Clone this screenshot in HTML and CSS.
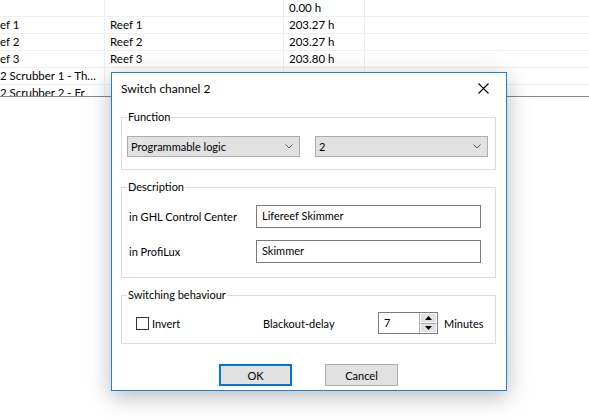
FILE: index.html
```html
<!DOCTYPE html>
<html lang="en">
<head>
    <meta charset="UTF-8">
    <title>Switch channel 2</title>
    <link rel="stylesheet" href="styles.css">
</head>
<body>
    <div class = 'channel_list'>
        <div class = 'list_row'>
            <div class = 'cell'></div>
            <div class = 'cell'></div>
            <div class = 'cell'>0.00 h</div>
            <div class = 'cell last'></div>
        </div>
        <div class = 'list_row'>
            <div class = 'cell'>ef 1</div>
            <div class = 'cell'>Reef 1</div>
            <div class = 'cell'>203.27 h</div>
            <div class = 'cell last'></div>
        </div>
        <div class = 'list_row'>
            <div class = 'cell'>ef 2</div>
            <div class = 'cell'>Reef 2</div>
            <div class = 'cell'>203.27 h</div>
            <div class = 'cell last'></div>
        </div>
        <div class = 'list_row'>
            <div class = 'cell'>ef 3</div>
            <div class = 'cell'>Reef 3</div>
            <div class = 'cell'>203.80 h</div>
            <div class = 'cell last'></div>
        </div>
        <div class = 'list_row'>
            <div class = 'cell'>2 Scrubber 1 - Th…</div>
            <div class = 'cell'></div>
            <div class = 'cell'></div>
            <div class = 'cell last'></div>
        </div>
        <div class = 'list_row'>
            <div class = 'cell'>2 Scrubber 2 - Fr</div>
            <div class = 'cell'></div>
            <div class = 'cell'></div>
            <div class = 'cell last'></div>
        </div>
    </div>

    <div class = 'dialog'>
        <div class = 'dialog_title'>
            <span>Switch channel 2</span>
            <svg class = 'close_icon' width = '11' height = '11' viewBox = '0 0 11 11'>
                <path d = 'M0.5 0.5 L10.5 10.5 M10.5 0.5 L0.5 10.5' stroke = '#000' stroke-width = '1.1' fill = 'none'/>
            </svg>
        </div>

        <fieldset class = 'group group_function'>
            <legend>Function</legend>
            <div class = 'function_body'>
                <div class = 'combo'>
                    <span>Programmable logic</span>
                    <svg width = '8' height = '5' viewBox = '0 0 8 5'><path d = 'M0.5 0.5 L4 4 L7.5 0.5' stroke = '#555' fill = 'none'/></svg>
                </div>
                <div class = 'combo'>
                    <span>2</span>
                    <svg width = '8' height = '5' viewBox = '0 0 8 5'><path d = 'M0.5 0.5 L4 4 L7.5 0.5' stroke = '#555' fill = 'none'/></svg>
                </div>
            </div>
        </fieldset>

        <fieldset class = 'group group_description'>
            <legend>Description</legend>
            <div class = 'description_body'>
                <label>in GHL Control Center</label>
                <div class = 'text_box'>Lifereef Skimmer</div>
                <label>in ProfiLux</label>
                <div class = 'text_box'>Skimmer</div>
            </div>
        </fieldset>

        <fieldset class = 'group group_switching'>
            <legend>Switching behaviour</legend>
            <div class = 'switching_body'>
                <div class = 'check_item'>
                    <span class = 'check_box'></span>
                    <span>Invert</span>
                </div>
                <span class = 'delay_label'>Blackout-delay</span>
                <div class = 'spin_box'>
                    <span class = 'spin_value'>7</span>
                    <div class = 'spin_buttons'>
                        <div class = 'spin_btn'><svg width = '7' height = '4' viewBox = '0 0 7 4'><path d = 'M0 4 L3.5 0 L7 4 Z' fill = '#000'/></svg></div>
                        <div class = 'spin_btn'><svg width = '7' height = '4' viewBox = '0 0 7 4'><path d = 'M0 0 L3.5 4 L7 0 Z' fill = '#000'/></svg></div>
                    </div>
                </div>
                <span class = 'minutes_label'>Minutes</span>
            </div>
        </fieldset>

        <div class = 'dialog_buttons'>
            <button class = 'dialog_btn default_btn'>OK</button>
            <button class = 'dialog_btn'>Cancel</button>
        </div>
    </div>
</body>
</html>
```

FILE: styles.css
```css
body{
    margin: 0;
    width: 589px;
    height: 420px;
    background-color: #fff;
    font-family: Lato, "Noto Sans", sans-serif;
    font-size: 11.5px;
    color: #000;
    position: relative;
    overflow: hidden;
}

/* list behind the dialog */
.channel_list{
    height: 96px;
    overflow: hidden;
    border-bottom: 1px solid #828790;
}

.list_row{
    display: grid;
    grid-template-columns: 105px 179px 81px 1fr;
    height: 16px;
    border-bottom: 1px solid #f0f0f0;
}

.cell{
    border-right: 1px solid #e9eef4;
    padding-left: 5px;
    line-height: 16px;
    white-space: nowrap;
    overflow: hidden;
}

.cell:first-child{
    padding-left: 0;
}

.cell.last{
    border-right: 0;
}

/* dialog */
.dialog{
    position: absolute;
    left: 111px;
    top: 72px;
    width: 396px;
    height: 319px;
    background-color: #fff;
    border: 1px solid #1883d7;
    box-shadow: 0 6px 22px rgba(0, 0, 0, 0.28);
    padding: 0 10px 0 9px;
    box-sizing: border-box;
    font-size: 11px;
}

.dialog_title{
    display: flex;
    justify-content: space-between;
    align-items: center;
    height: 30px;
    margin-right: -1px;
    font-size: 12px;
}

.close_icon{
    margin-right: 8px;
}

.group{
    border: 1px solid #dcdcdc;
    margin: 0;
    padding: 0;
    min-width: 0;
}

.group legend{
    padding: 0 1px;
    margin-left: 5px;
    line-height: 16px;
}

.group_function{
    margin-top: 6px;
}

.function_body{
    display: grid;
    grid-template-columns: 173px 173px;
    column-gap: 15px;
    padding: 11px 6px 12px 5px;
}

.combo{
    display: flex;
    justify-content: space-between;
    align-items: center;
    height: 19px;
    border: 1px solid #adadad;
    background-color: #e1e1e1;
    padding: 0 6px 0 3px;
}

.group_description, .group_switching{
    margin-top: 9px;
}

.description_body{
    display: grid;
    grid-template-columns: 127px 225px;
    grid-auto-rows: 23px;
    row-gap: 12px;
    align-items: center;
    padding: 10px 13px 14px 7px;
}

.text_box{
    height: 23px;
    line-height: 20px;
    border: 1px solid #7a7a7a;
    padding-left: 5px;
    box-sizing: border-box;
}

.switching_body{
    display: flex;
    align-items: center;
    padding: 9px 0 9px 14px;
    height: 22px;
}

.check_item{
    display: flex;
    align-items: center;
    gap: 3px;
    width: 127px;
}

.check_box{
    width: 11px;
    height: 11px;
    border: 1px solid #333;
    background-color: #fff;
}

.delay_label{
    width: 115px;
}

.spin_box{
    display: flex;
    height: 22px;
    width: 60px;
    border: 1px solid #7a7a7a;
    box-sizing: border-box;
}

.spin_value{
    flex: 1;
    padding-left: 5px;
    line-height: 20px;
}

.spin_buttons{
    display: flex;
    flex-direction: column;
    width: 17px;
    border-left: 1px solid #adadad;
}

.spin_btn{
    flex: 1;
    display: flex;
    align-items: center;
    justify-content: center;
    background-color: #e1e1e1;
    border: 1px solid #fff;
}

.spin_btn + .spin_btn{
    border-top: 1px solid #adadad;
}

.minutes_label{
    margin-left: 6px;
}

.dialog_buttons{
    display: flex;
    justify-content: center;
    gap: 33px;
    margin-top: 20px;
}

.dialog_btn{
    width: 73px;
    height: 22px;
    background-color: #e1e1e1;
    border: 1px solid #adadad;
    font-family: inherit;
    font-size: 11px;
    color: #000;
    padding: 0;
}

.default_btn{
    border: 2px solid #0078d7;
}
```
